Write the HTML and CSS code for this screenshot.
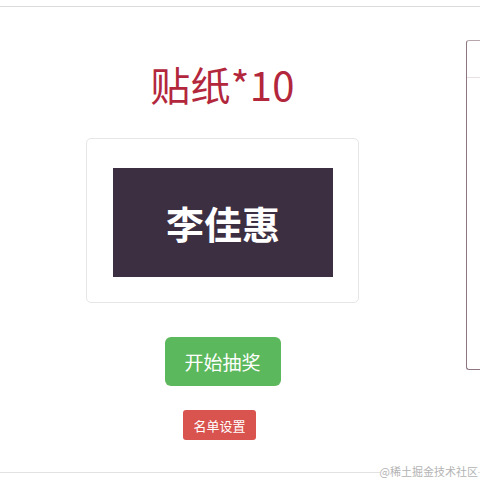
FILE: index.html
```html
<!DOCTYPE html>
<html lang="zh">
<head>
<meta charset="utf-8">
<link rel="stylesheet" href="styles.css">
</head>
<body>
<div class="page">
  <div class="frame">
    <div class="main">
      <h1 class="title">贴纸*10</h1>
      <div class="card">
        <div class="namebox">李佳惠</div>
      </div>
      <button class="btn btn-start">开始抽奖</button>
      <button class="btn btn-list">名单设置</button>
    </div>
    <div class="side">
      <div class="side-head"></div>
    </div>
  </div>
  <div class="watermark">@稀土掘金技术社区</div>
</div>
</body>
</html>
```
FILE: styles.css
```css
html, body {
  margin: 0;
  padding: 0;
  background: #fff;
  overflow: hidden;
  width: 480px;
  height: 480px;
  font-family: "Noto Sans CJK SC", "Noto Sans", sans-serif;
}
.page {
  position: relative;
  padding-top: 6px;
  height: 480px;
  box-sizing: border-box;
}
.frame {
  display: flex;
  border-top: 1px solid #dcdcdc;
  border-bottom: 1px solid #e2e2e2;
  height: 467px;
  box-sizing: border-box;
}
.main {
  width: 445px;
  flex: none;
  display: flex;
  flex-direction: column;
  align-items: center;
  padding-top: 53px;
}
.title {
  margin: 0;
  font-size: 40px;
  line-height: 48px;
  font-weight: 400;
  color: #b3273d;
  letter-spacing: 0.3px;
}
.card {
  margin-top: 30px;
  width: 273px;
  height: 165px;
  box-sizing: border-box;
  border: 1px solid #e6e6e6;
  border-radius: 5px;
  padding: 29px 25px 25px 26px;
}
.namebox {
  width: 220px;
  height: 109px;
  background: #3d2f42;
  color: #fff;
  font-size: 38px;
  font-weight: 700;
  display: flex;
  align-items: center;
  justify-content: center;
}
.btn {
  border: none;
  color: #fff;
  font-family: "Noto Sans CJK SC", "Noto Sans", sans-serif;
  display: flex;
  align-items: center;
  justify-content: center;
  padding: 0;
}
.btn-start {
  margin-top: 34px;
  width: 116px;
  height: 49px;
  background: #5cb85c;
  border-radius: 6px;
  font-size: 19px;
}
.btn-list {
  margin-top: 24px;
  margin-left: -6px;
  width: 73px;
  height: 30px;
  background: #d9534f;
  border-radius: 3px;
  font-size: 13px;
}
.side {
  margin-top: 33px;
  margin-left: 21px;
  flex: 1;
  min-width: 0;
  height: 330px;
  box-sizing: border-box;
  border-left: 1px solid #8c7480;
  border-top: 1px solid #b8a6ae;
  border-bottom: 1px solid #8c7480;
  border-radius: 3px 0 0 3px;
}
.side-head {
  height: 36px;
  border-bottom: 1px solid #e8dfe2;
}
.watermark {
  position: absolute;
  right: 2px;
  bottom: 2px;
  font-size: 11px;
  line-height: 14px;
  color: #b4b4b4;
  background: #fff;
  font-family: "Noto Sans CJK SC", sans-serif;
}
```
